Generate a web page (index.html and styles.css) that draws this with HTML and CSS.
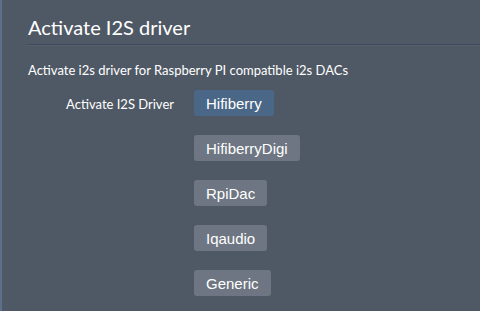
FILE: index.html
```html
<!DOCTYPE html>
<html lang="en">
<head>
  <meta charset="UTF-8">
  <title>Activate I2S driver</title>
  <link rel="stylesheet" href="styles.css">
</head>
<body>
  <div class="panel">
    <h2 class="panel-title">Activate I2S driver</h2>
    <p class="desc">Activate i2s driver for Raspberry PI compatible i2s DACs</p>
    <div class="field">
      <label class="field-label">Activate I2S Driver</label>
      <div class="options">
        <button class="opt active">Hifiberry</button>
        <button class="opt">HifiberryDigi</button>
        <button class="opt">RpiDac</button>
        <button class="opt">Iqaudio</button>
        <button class="opt">Generic</button>
      </div>
    </div>
  </div>
</body>
</html>
```

FILE: styles.css
```css
* {
  box-sizing: border-box;
  margin: 0;
  padding: 0;
}

body {
  background-color: #4f5965;
  color: #fff;
  font-family: Lato, sans-serif;
  border-left: 2px solid #5d6f89;
  height: 311px;
  overflow: hidden;
}

.panel {
  padding: 15px 0 0 25px;
}

.panel-title {
  font-size: 20px;
  font-weight: 400;
  line-height: 24px;
  padding-left: 1px;
  padding-bottom: 5px;
  border-bottom: 1px solid #3e4a5e;
  box-shadow: 0 1px 0 #56606d;
}

.desc {
  font-size: 13px;
  margin-top: 17px;
  padding-left: 1px;
  line-height: 16px;
}

.field {
  display: flex;
  margin-top: 12px;
}

.field-label {
  width: 148px;
  text-align: right;
  font-size: 13px;
  padding-top: 6px;
  padding-right: 1px;
}

.options {
  display: flex;
  flex-direction: column;
  align-items: flex-start;
  gap: 19px;
  margin-left: 19px;
}

.opt {
  font-family: "Liberation Sans", Arial, sans-serif;
  font-size: 15px;
  color: #fff;
  background-color: #6d7682;
  border: none;
  border-radius: 3px;
  height: 26px;
  padding: 0 12px;
}

.opt.active {
  background-color: #4a6788;
}
```
